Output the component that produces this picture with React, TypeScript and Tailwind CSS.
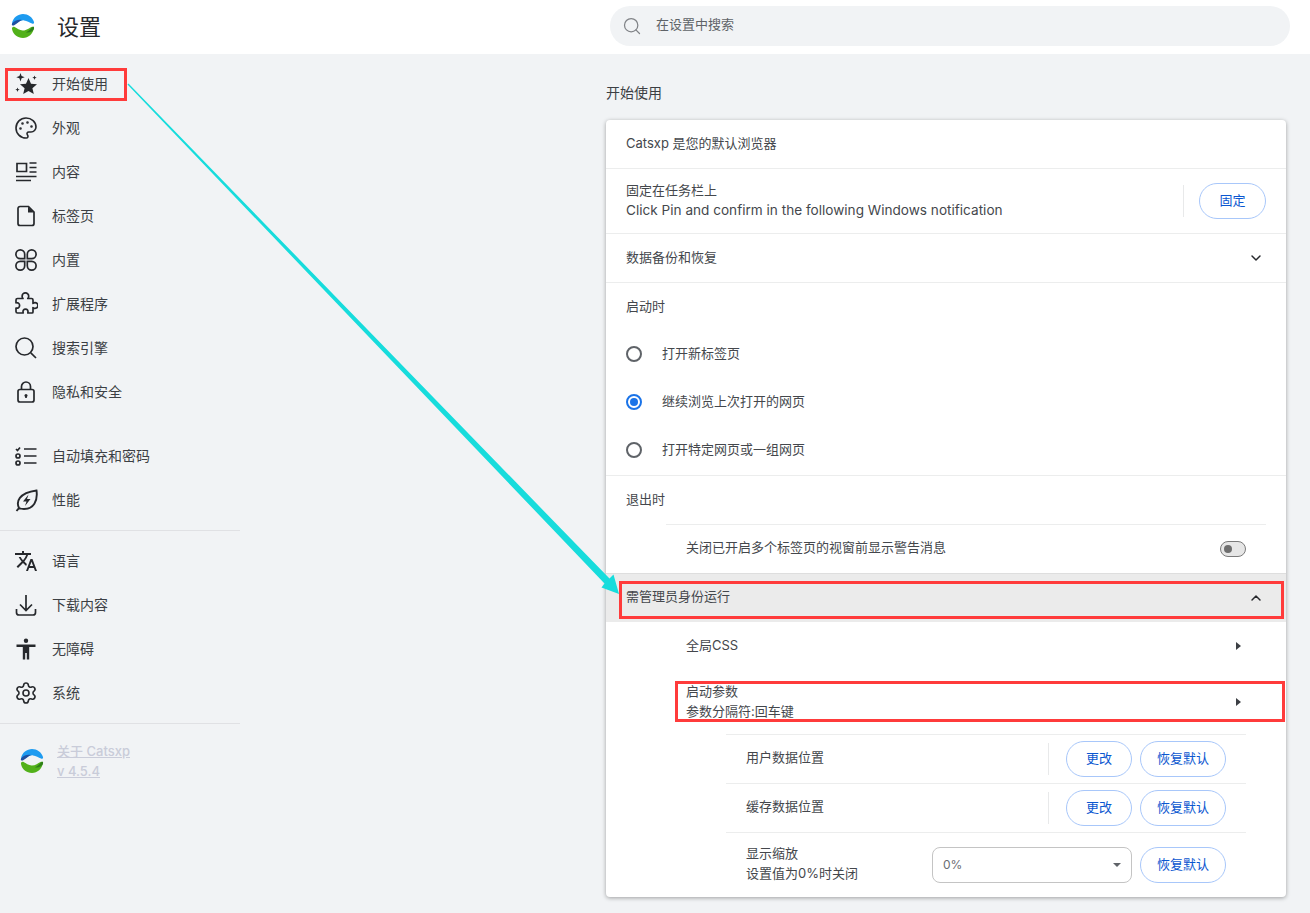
import type { ReactNode } from 'react';
import { ChevronDown, ChevronUp, Palette, Search, Settings } from 'lucide-react';
import { MdTranslate } from 'react-icons/md';

function Logo({ className }: { readonly className: string }) {
  return (
    <svg viewBox="0 0 24 24" className={className}>
      <path d="M1 9.500C2 3.500 7 0 12 0s9.500 3 11 8c.4 1.400-.8 2.200-2 1.600C18.500 8.400 16 6.600 13 6.400 9 6 6 9.600 2.600 10.600 1.600 10.900.9 10.400 1 9.500Z" fill="#1e9bf0" />
      <path d="M.8 10.600C1 8.600 3 7.200 5 6.400c2-.8 4-1 6-.4-2.600 1-5 3.800-8.200 5.400-1 .5-2 0-2-.8Z" fill="#1f4fa0" />
      <path d="M1 15c-.3-1.600 1-2.800 2.600-2 2.400 1.200 5 3.400 8 3.600 4 .2 6.600-2.800 9.400-3.800.9-.3 2.200 0 2 1.200C22 19.800 17.500 24 12 24 6.500 24 2 20.500 1 15Z" fill="#52b11a" />
      <path d="M23 13.300c.4 1.600-.6 3-2.200 4-1.800 1.100-3.800 1.500-5.800 1 2.800-.8 4.500-3.500 6.200-5 .7-.6 1.600-.7 1.800 0Z" fill="#2f7f1a" />
    </svg>
  );
}

const ink = '#26282c';
const stroke = { fill: 'none', stroke: ink, strokeWidth: 1.7 };
const box = 'w-6 h-6';

function StartIcon() {
  return (
    <svg viewBox="0 0 24 24" className={box} fill={ink}>
      <path d="M14.500 6l2.500 5.700 6 .5-4.600 4 1.400 5.800-5.300-3.100-5.300 3.100 1.400-5.800-4.600-4 6-.5Z" />
      <path d="M6.500 1l1.100 3.100 3.100 1.100-3.100 1.100-1.100 3.100-1.100-3.100-3.100-1.100 3.100-1.100Z" />
      <path d="M20.500 3.500l.6 1.600 1.600.6-1.600.6-.6 1.600-.6-1.600-1.600-.6 1.600-.6ZM3.500 15.500l.6 1.600 1.600.6-1.600.6-.6 1.600-.6-1.600-1.600-.6 1.600-.6Z" />
    </svg>
  );
}

function ContentIcon() {
  return (
    <svg viewBox="0 0 24 24" className={box} {...stroke}>
      <path d="M3 3.500h9.500v8H3zM15.500 3h7M15.500 7.500h7M15.500 12h7M2 16.500h20.500M2 20.500h15" />
    </svg>
  );
}

function FileIcon() {
  return (
    <svg viewBox="0 0 24 24" className={box} fill="none">
      <path d="M14.500 2.500H6A2 2 0 0 0 4 4.500v15a2 2 0 0 0 2 2h12a2 2 0 0 0 2-2V8Z" stroke={ink} strokeWidth="1.700" />
      <path d="M14 2.500V8.500H20Z" fill={ink} />
    </svg>
  );
}

function CommandIcon() {
  return (
    <svg viewBox="0 0 24 24" className={box} {...stroke}>
      <path d="M10.700 10.700H6.300a4.400 4.400 0 1 1 4.400-4.400Z" />
      <path d="M13.300 10.700h4.400a4.400 4.400 0 1 0-4.400-4.400Z" />
      <path d="M10.700 13.300H6.300a4.400 4.400 0 1 0 4.400 4.400Z" />
      <path d="M13.300 13.300h4.400a4.400 4.400 0 1 1-4.400 4.400Z" />
    </svg>
  );
}

function PuzzleIcon() {
  return (
    <svg viewBox="0 0 24 24" className={box} {...stroke} strokeLinejoin="round">
      <path d="M3.500 6.500H9c-.8-1-.9-1.700-.9-2.300a3.300 3.300 0 0 1 6.600 0c0 .6-.1 1.300-.9 2.300h3.700a1.500 1.500 0 0 1 1.500 1.500v3.400c1-.7 1.500-.8 2-.8a2.900 2.900 0 0 1 0 5.800c-.5 0-1-.1-2-.8v4.400a1 1 0 0 1-1 1h-4.200c.7-2.700-.7-3.900-2.300-3.900s-3 1.200-2.300 3.900H3.500a1.500 1.500 0 0 1-1.500-1.500v-3.400c2.300.4 3.600-1 3.600-2.700S4.300 10.400 2 10.800V8a1.500 1.500 0 0 1 1.500-1.500Z" />
    </svg>
  );
}

function SearchIcon() {
  return (
    <svg viewBox="0 0 24 24" className={box} {...stroke}>
      <circle cx="10.500" cy="10.500" r="8.500" />
      <path d="M16.800 16.800L22 22" />
    </svg>
  );
}

function LockIcon() {
  return (
    <svg viewBox="0 0 24 24" className={box} {...stroke}>
      <rect x="4" y="9.500" width="16" height="12.500" rx="2" />
      <path d="M7.500 9.500V6.500a4.500 4.500 0 0 1 9 0v3" />
      <circle cx="12" cy="15.500" r="1.500" fill={ink} stroke="none" />
      <path d="M12 15.500v2.500" />
    </svg>
  );
}

function AutofillIcon() {
  return (
    <svg viewBox="0 0 24 24" className={box} {...stroke}>
      <path d="M2 5l1.500 1.500L6 3.500M10 5h12.500M10 12h12.500M10 19h12.500" />
      <circle cx="4" cy="12" r="2" />
      <circle cx="4" cy="19" r="2" />
    </svg>
  );
}

function LeafIcon() {
  return (
    <svg viewBox="0 0 24 24" className={box} fill="none">
      <path d="M2.500 23L5 20C2 14 4.500 5 22.500 2.500 24 13 19.500 21 10 21c-1.800 0-3.500-.3-5-1" stroke={ink} strokeWidth="1.900" />
      <path d="M14.500 6.500L9 13.500h3.500L11 18l5.500-7H13Z" fill={ink} />
    </svg>
  );
}

function DownloadIcon() {
  return (
    <svg viewBox="0 0 24 24" className={box} {...stroke}>
      <path d="M12 2v15M6 11.500l6 6 6-6M2.500 16v3.500a2.500 2.500 0 0 0 2.500 2.500h14a2.500 2.500 0 0 0 2.500-2.500V16" />
    </svg>
  );
}

function AccessibilityIcon() {
  return (
    <svg viewBox="0 0 24 24" className={box} fill={ink}>
      <circle cx="12" cy="3.700" r="2.200" />
      <path d="M2.500 7.500h19v2.500h-6.300v12.500h-2.400V16h-1.600v6.500H8.800V10H2.500Z" />
    </svg>
  );
}

type NavItem = { readonly label: string; readonly icon: ReactNode };

const lu = 'w-6 h-6 text-[#26282c]';

const groupA: NavItem[] = [
  { label: '开始使用', icon: <StartIcon /> },
  { label: '外观', icon: <Palette className={lu} strokeWidth={1.6} /> },
  { label: '内容', icon: <ContentIcon /> },
  { label: '标签页', icon: <FileIcon /> },
  { label: '内置', icon: <CommandIcon /> },
  { label: '扩展程序', icon: <PuzzleIcon /> },
  { label: '搜索引擎', icon: <SearchIcon /> },
  { label: '隐私和安全', icon: <LockIcon /> },
];

const groupB: NavItem[] = [
  { label: '自动填充和密码', icon: <AutofillIcon /> },
  { label: '性能', icon: <LeafIcon /> },
];

const groupC: NavItem[] = [
  { label: '语言', icon: <MdTranslate className="text-[24px] text-[#26282c]" /> },
  { label: '下载内容', icon: <DownloadIcon /> },
  { label: '无障碍', icon: <AccessibilityIcon /> },
  { label: '系统', icon: <Settings className={lu} strokeWidth={1.6} /> },
];

function NavRow({ item }: { readonly item: NavItem }) {
  return (
    <div className="flex items-center h-11 pl-[14px]">
      <span className="w-6 h-6 flex items-center justify-center shrink-0">{item.icon}</span>
      <span className="ml-[14px] pb-[2px] text-[14px] text-[#3c3f44]">{item.label}</span>
    </div>
  );
}

function Sidebar() {
  return (
    <aside className="w-[240px] shrink-0 pt-2">
      {groupA.map((item) => (
        <NavRow key={item.label} item={item} />
      ))}
      <div className="mt-5">
        {groupB.map((item) => (
          <NavRow key={item.label} item={item} />
        ))}
      </div>
      <div className="my-2 border-t border-[#e0e1e4]" />
      {groupC.map((item) => (
        <NavRow key={item.label} item={item} />
      ))}
      <div className="my-2 border-t border-[#e0e1e4]" />
      <div className="flex items-center pl-5 pt-[9px]">
        <Logo className="w-6 h-6 shrink-0" />
        <div className="ml-[13px] text-[13px] leading-5 font-medium text-[#c9ccd9] underline">
          <div>关于 Catsxp</div>
          <div>v 4.5.4</div>
        </div>
      </div>
    </aside>
  );
}

function OutlineButton({ label, className }: { readonly label: string; readonly className: string }) {
  return (
    <button type="button" className={`h-9 rounded-full border border-[#a8c7fa] bg-white text-[13px] text-[#0b57d0] ${className}`}>
      {label}
    </button>
  );
}

function Radio({ label, checked }: { readonly label: string; readonly checked?: boolean }) {
  return (
    <div className="flex items-center h-12 pl-5">
      <span className={`w-4 h-4 rounded-full border-2 flex items-center justify-center ${checked ? 'border-[#1a73e8]' : 'border-[#5f6368]'}`}>
        {checked && <span className="w-2 h-2 rounded-full bg-[#1a73e8]" />}
      </span>
      <span className="ml-5">{label}</span>
    </div>
  );
}

function Caret() {
  return <span className="w-0 h-0 border-y-[4px] border-y-transparent border-l-[5px] border-l-[#3c3f44]" />;
}

function PathRow({ label }: { readonly label: string }) {
  return (
    <div className="flex items-center h-[49px] pl-5 pr-5 border-t border-[#eceded]">
      <span className="flex-1 pb-[2px]">{label}</span>
      <span className="h-8 border-l border-[#e8e9ea] mr-[17px]" />
      <OutlineButton label="更改" className="w-[66px]" />
      <OutlineButton label="恢复默认" className="w-[86px] ml-2" />
    </div>
  );
}

function Card() {
  return (
    <div className="w-[680px] rounded bg-white text-[13px] text-[#44474c] shadow-[0_1px_4px_rgba(0,0,0,0.35)]">
      <div className="flex items-center h-12 px-5">Catsxp 是您的默认浏览器</div>
      <div className="flex items-center h-[65px] pl-5 pr-5 border-t border-[#eceded]">
        <div className="flex-1 leading-5 pb-[2px]">
          <div>固定在任务栏上</div>
          <div className="text-[13.6px]">Click Pin and confirm in the following Windows notification</div>
        </div>
        <span className="h-8 border-l border-[#e8e9ea] mr-[15px]" />
        <OutlineButton label="固定" className="w-[67px]" />
      </div>
      <div className="flex items-center justify-between h-[49px] pl-5 pr-[22px] border-t border-[#eceded]">
        <span>数据备份和恢复</span>
        <ChevronDown className="w-4 h-4 text-[#26282c]" strokeWidth={2.2} />
      </div>
      <div className="flex items-center h-[48px] px-5 border-t border-[#eceded]">启动时</div>
      <div className="pb-px">
        <Radio label="打开新标签页" />
        <Radio label="继续浏览上次打开的网页" checked />
        <Radio label="打开特定网页或一组网页" />
      </div>
      <div className="flex items-center h-[49px] px-5 border-t border-[#eceded]">退出时</div>
      <div className="ml-[60px] mr-5 flex items-center justify-between h-[49px] pl-5 pr-5 border-t border-[#eceded]">
        <span className="pb-[2px]">关闭已开启多个标签页的视窗前显示警告消息</span>
        <span className="w-[26px] h-4 rounded-full bg-[#e6e6e6] border border-[#7a7a7a] flex items-center pl-[3px]">
          <span className="w-2 h-2 rounded-full bg-[#6e6e6e]" />
        </span>
      </div>
      <div className="flex items-center justify-between h-[49px] pl-5 pr-[22px] bg-[#ebebeb] border-t border-[#dedede]">
        <span className="pb-[2px]">需管理员身份运行</span>
        <ChevronUp className="w-4 h-4 text-[#26282c]" strokeWidth={2.2} />
      </div>
      <div className="flex items-center justify-between h-12 pl-20 pr-[45px]">
        <span>全局CSS</span>
        <Caret />
      </div>
      <div className="flex items-center justify-between h-16 pl-20 pr-[45px] leading-5">
        <div className="pb-[2px]">
          <div>启动参数</div>
          <div>参数分隔符:回车键</div>
        </div>
        <Caret />
      </div>
      <div className="ml-[120px] mr-10">
        <PathRow label="用户数据位置" />
        <PathRow label="缓存数据位置" />
        <div className="flex items-center h-[65px] pl-5 pr-5 border-t border-[#eceded]">
          <div className="flex-1 leading-5 pb-[4px]">
            <div>显示缩放</div>
            <div>设置值为0%时关闭</div>
          </div>
          <div className="w-[200px] h-9 rounded-lg border border-[#c4c4c4] flex items-center justify-between pl-[10px] pr-[10px] text-[12px] text-[#6b6e73]">
            <span>0%</span>
            <span className="w-0 h-0 border-x-[4px] border-x-transparent border-t-[4px] border-t-[#5f6368]" />
          </div>
          <OutlineButton label="恢复默认" className="w-[86px] ml-2" />
        </div>
      </div>
    </div>
  );
}

export default function App() {
  return (
    <div className="relative w-[1310px] h-[913px] overflow-hidden bg-[#f1f3f5] font-['Inter','Noto_Sans_CJK_SC',sans-serif]">
      <header className="flex items-start h-[54px] bg-white">
        <Logo className="w-6 h-6 ml-[11px] mt-[14px] shrink-0" />
        <h1 className="ml-[22px] mt-[11px] text-[22px] font-normal text-[#26282c]">设置</h1>
        <div className="ml-[509px] mt-[6px] w-[680px] h-10 rounded-full bg-[#f1f3f5] flex items-center pl-[12px]">
          <Search className="w-[20px] h-[20px] text-[#808387]" strokeWidth={1.5} />
          <span className="ml-[14px] pb-[2px] text-[13px] text-[#5f6368]">在设置中搜索</span>
        </div>
      </header>
      <div className="flex">
        <Sidebar />
        <main className="ml-[366px]">
          <h2 className="h-[66px] pt-[29px] text-[14px] leading-5 font-normal text-[#3c3f44]">开始使用</h2>
          <Card />
        </main>
      </div>

      {/* annotations drawn over the screenshot */}
      <div className="absolute left-[5px] top-[68px] w-[122px] h-[33px] border-[3px] border-[#ff3b3b]" />
      <div className="absolute left-[619px] top-[581px] w-[665px] h-[38px] border-[3px] border-[#ff3b3b]" />
      <div className="absolute left-[675px] top-[681px] w-[610px] h-[41px] border-[3px] border-[#ff3b3b]" />
      <svg className="absolute inset-0 w-[1310px] h-[913px] pointer-events-none" viewBox="0 0 1310 913">
        <polygon points="127.500,84.500 128.500,83.500 609.500,578.600 613.500,574.500 619,594 601.500,587.500 604.500,583.400" fill="#17dcdc" />
      </svg>
    </div>
  );
}
